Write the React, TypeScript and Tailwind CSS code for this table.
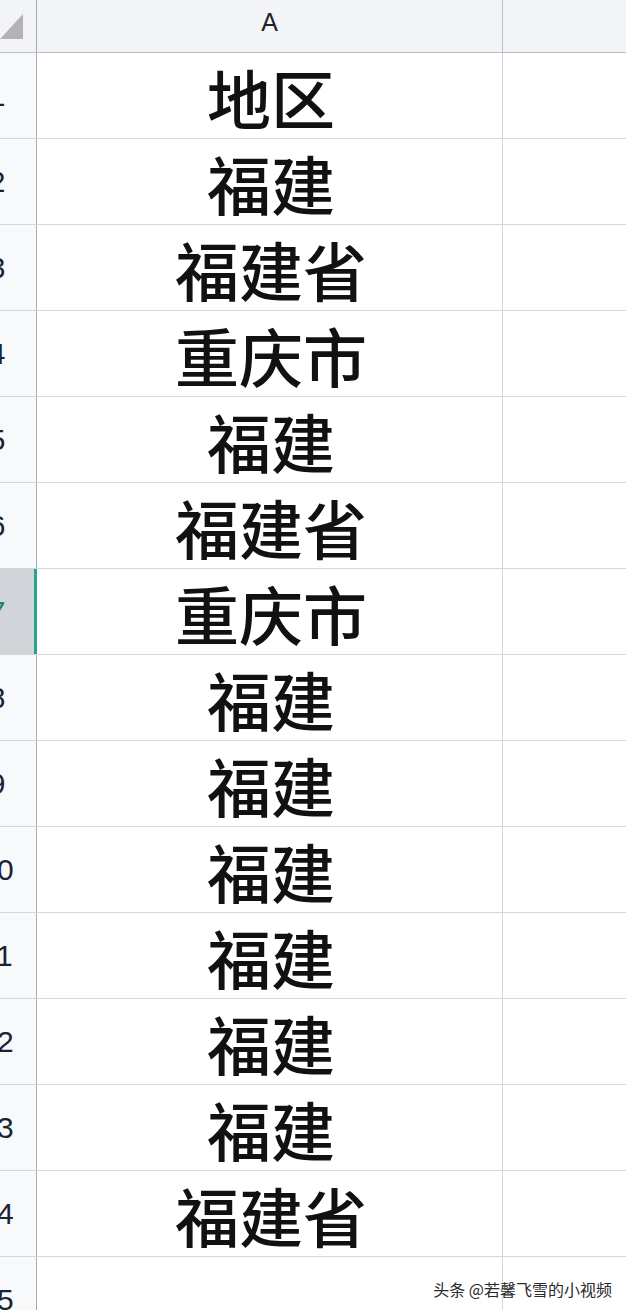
const rows = [
  "地区",
  "福建",
  "福建省",
  "重庆市",
  "福建",
  "福建省",
  "重庆市",
  "福建",
  "福建",
  "福建",
  "福建",
  "福建",
  "福建",
  "福建省",
  "",
];

const cjk = { fontFamily: '"Noto Sans CJK SC", "Noto Sans CJK JP", sans-serif' };
const latin = { fontFamily: '"Liberation Sans", Arial, sans-serif' };

export default function App() {
  return (
    <div className="relative w-[626px] h-[1310px] overflow-hidden bg-white">
      {/* column header */}
      <div className="flex h-[53px] border-b border-[#b9bec7] bg-[#f2f4f8]">
        <div className="w-[37px] shrink-0 border-r border-[#a7acb4] relative">
          <svg className="absolute left-0 top-[14px]" width="24" height="25" viewBox="0 0 24 25">
            <polygon points="23,0 23,25 0,25" fill="#b3b3b3" />
          </svg>
        </div>
        <div className="w-[466px] shrink-0 border-r border-[#b9bec7] flex items-center justify-center pb-[6px]">
          <span className="text-[25px] text-[#222]" style={latin}>A</span>
        </div>
        <div className="flex-1" />
      </div>

      {rows.map((txt, i) => {
        const sel = i === 6;
        return (
          <div key={i} className="flex h-[86px] border-b border-[#d3d6dc]">
            <div
              className={
                "w-[37px] shrink-0 overflow-hidden flex items-center " +
                (sel ? "bg-[#d1d4d9] border-r-[3px] border-[#25a489]" : "bg-[#f8f9fb] border-r border-[#a7acb4]")
              }
            >
              <div
                className={"w-[78px] shrink-0 ml-[-42px] text-center text-[30px] leading-none " + (sel ? "text-[#1f7f6d]" : "text-[#1a2333]")}
                style={latin}
              >
                {i + 1}
              </div>
            </div>
            <div className="w-[466px] shrink-0 border-r border-[#d3d6dc] flex items-center justify-center pl-[3px]">
              <span className="text-[64px] leading-none font-medium text-[#111]" style={cjk}>
                {txt}
              </span>
            </div>
            <div className="flex-1" />
          </div>
        );
      })}

      <div
        className="absolute right-[14px] bottom-[13px] text-[16px] leading-none text-[#2a2a2a] [text-shadow:0_0_2px_#fff]"
        style={cjk}
      >
        头条 @若馨飞雪的小视频
      </div>
    </div>
  );
}
